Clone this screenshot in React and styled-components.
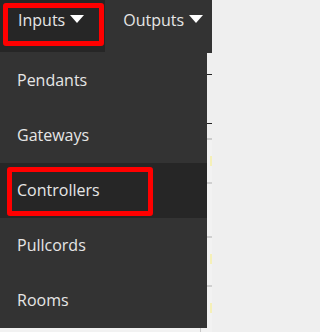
import React from 'react';
import styled, { createGlobalStyle, css } from 'styled-components';

const GlobalStyle = createGlobalStyle`
  html, body {
    margin: 0;
    padding: 0;
    background: #efefef;
    font-family: "Open Sans", "Liberation Sans", sans-serif;
  }
  *, *::before, *::after {
    box-sizing: border-box;
  }
`;

const Page = styled.div`
  position: relative;
  width: 212px;
  height: 332px;
  overflow: hidden;
  background: #efefef;
`;

const Navbar = styled.nav`
  display: flex;
  height: 53px;
  background: #333333;
`;

// red annotation frame drawn over a highlighted item
const redBox = css`
  &::after {
    content: '';
    position: absolute;
    border: 5px solid #ff0000;
    border-radius: 3px;
    pointer-events: none;
  }
`;

const NavItem = styled.div`
  position: relative;
  display: flex;
  align-items: flex-start;
  gap: 5px;
  height: 52px;
  padding: 10px 21px 0 18px;
  line-height: 20px;
  font-size: 16px;
  color: #e6e6e6;
  white-space: nowrap;
  background: ${props => (props.active ? '#262626' : 'transparent')};
  ${props => props.marked && redBox}
  &::after {
    top: 3px;
    left: 3px;
    width: 101px;
    height: 43px;
  }
`;

const Caret = styled.span`
  margin-top: 5px;
  width: 0;
  height: 0;
  border-left: 7.5px solid transparent;
  border-right: 7.5px solid transparent;
  border-top: 8px solid #ffffff;
`;

const Content = styled.div`
  display: flex;
  flex-direction: column;
`;

const TableHead = styled.div`
  height: 22px;
  border-bottom: 1px solid #222222;
`;

const TitleRow = styled.div`
  height: 49px;
  border-bottom: 1px solid #222222;
`;

const Spacer = styled.div`
  height: 16px;
  border-bottom: 2px solid #cccccc;
`;

const Row = styled.div`
  display: grid;
  grid-template-columns: 200px 10px 1fr;
  height: ${props => props.h}px;
  border-bottom: 2px solid #d0d0d0;
  background: #f2f2f2;
`;

const Cell = styled.div`
  border-left: ${props => (props.line ? '1px solid #c8c8c8' : 'none')};
`;

const Field = styled.div`
  margin-top: 16px;
  height: 10px;
  background: #f5f0b8;
`;

const Menu = styled.ul`
  position: absolute;
  top: 53px;
  left: 0;
  width: 207px;
  margin: 0;
  padding: 0;
  list-style: none;
  background: #333333;
`;

const MenuItem = styled.li`
  position: relative;
  height: 55px;
  padding: 17px 17px 0;
  line-height: 20px;
  font-size: 16px;
  color: #e6e6e6;
  background: ${props => (props.active ? '#262626' : 'transparent')};
  ${props => props.marked && redBox}
  &::after {
    top: 4px;
    left: 7px;
    width: 146px;
    height: 49px;
  }
`;

const menuItems = ['Pendants', 'Gateways', 'Controllers', 'Pullcords', 'Rooms'];

export default function App() {
  return (
    <Page>
      <GlobalStyle />
      <Navbar>
        <NavItem active marked>
          Inputs <Caret />
        </NavItem>
        <NavItem>
          Outputs <Caret />
        </NavItem>
      </Navbar>
      <Content>
        <TableHead />
        <TitleRow />
        <Spacer />
        <Row h={44}>
          <Cell />
          <Cell line />
          <Field />
        </Row>
        <Row h={54}>
          <Cell />
          <Cell line />
          <Cell />
        </Row>
        <Row h={49}>
          <Cell />
          <Cell line />
          <Field />
        </Row>
        <Row h={50}>
          <Cell />
          <Cell line />
          <Field />
        </Row>
      </Content>
      <Menu>
        {menuItems.map(item => (
          <MenuItem
            key={item}
            active={item === 'Controllers'}
            marked={item === 'Controllers'}
          >
            {item}
          </MenuItem>
        ))}
      </Menu>
    </Page>
  );
}
